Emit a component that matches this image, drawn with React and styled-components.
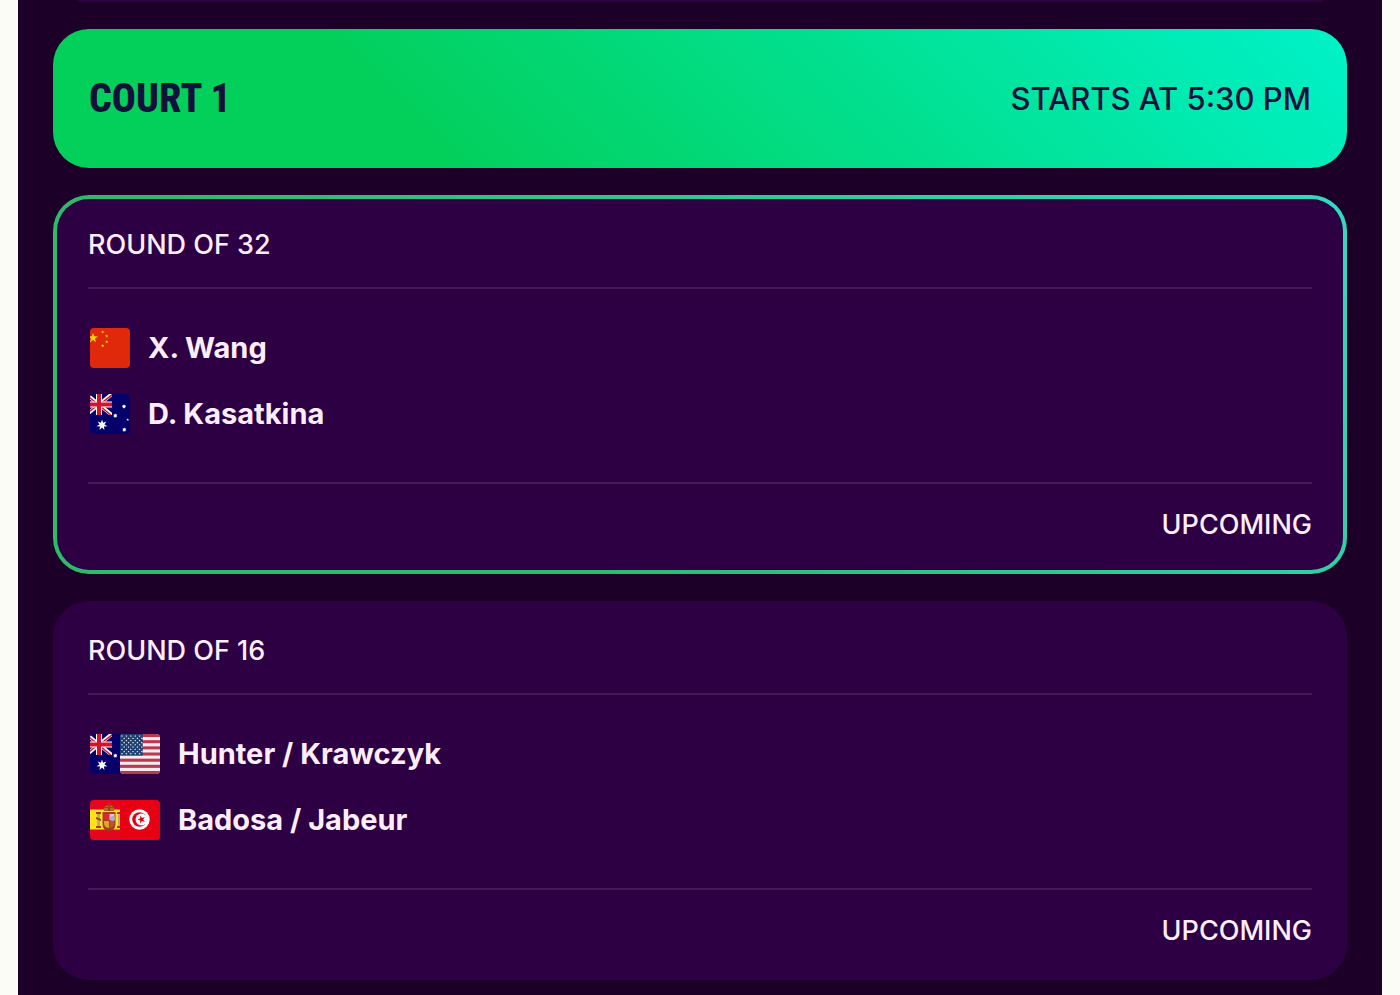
import React from "react";
import styled, { createGlobalStyle } from "styled-components";

const GlobalStyle = createGlobalStyle`
  *, *::before, *::after { box-sizing: border-box; }
  body {
    margin: 0;
    background: #fbfcf6;
    color: #fdeefe;
    font-family: Inter, "Liberation Sans", sans-serif;
  }
  h2, h3, p, ul { margin: 0; padding: 0; }
  ul { list-style: none; }
`;

const Schedule = styled.main`
  display: flex;
  flex-direction: column;
  gap: 27px;
  min-height: 100vh;
  margin: 0 18px;
  padding: 0 35px 15px;
  background: #1d0027;
`;

const PreviousCard = styled.div`
  height: 2px;
  margin: 0 24px;
  border-radius: 0 0 12px 12px;
  background: #2d0142;
`;

const CourtHeader = styled.header`
  display: flex;
  align-items: center;
  justify-content: space-between;
  height: 139px;
  padding: 0 36px;
  border-radius: 36px;
  background: linear-gradient(45deg, #03cf5b 28%, #00f2c9 100%);
  color: #12103c;
`;

const CourtName = styled.h2`
  font-family: "Roboto Condensed", "Liberation Sans Narrow", "Liberation Sans", sans-serif;
  font-size: 40px;
  line-height: 48px;
  font-weight: 800;
`;

const StartTime = styled.p`
  font-size: 31px;
  line-height: 40px;
  font-weight: 500;
`;

const Card = styled.article`
  padding: 0 31px;
  border: 4px solid transparent;
  border-radius: 36px;
  background:
    linear-gradient(#2d0044, #2d0044) ${({ $active }) => ($active ? "padding-box" : "border-box")},
    linear-gradient(45deg, #2dba6b 30%, #32dac0 100%) border-box;
`;

const CardHeader = styled.header`
  padding: 30px 0 26px;
  border-bottom: 2px solid #431a58;
`;

const Round = styled.h3`
  font-size: 27px;
  line-height: 32px;
  font-weight: 500;
`;

const Teams = styled.ul`
  display: flex;
  flex-direction: column;
  gap: 26px;
  padding: 39px 2px 48px;
`;

const Team = styled.li`
  display: flex;
  align-items: center;
  gap: 18px;
  height: 40px;
`;

const Flags = styled.span`
  display: flex;
`;

const FlagIcon = styled.svg`
  display: block;
  width: 40px;
  height: 40px;
  border-radius: 4px;

  & + & { margin-left: -10px; }
`;

const TeamName = styled.span`
  font-size: 29px;
  line-height: 40px;
  font-weight: 700;
`;

const CardFooter = styled.footer`
  padding: 25px 0 29px;
  border-top: 2px solid #431a58;
  text-align: right;
`;

const Status = styled.p`
  font-size: 27px;
  line-height: 32px;
  font-weight: 500;
`;

function starPoints(cx, cy, radius, points = 5, inner = 0.4) {
  return Array.from({ length: points * 2 }, (_, i) => {
    const r = i % 2 ? radius * inner : radius;
    const a = (Math.PI * i) / points - Math.PI / 2;
    return `${(cx + r * Math.cos(a)).toFixed(2)},${(cy + r * Math.sin(a)).toFixed(2)}`;
  }).join(" ");
}

function ChinaArt() {
  return (
    <>
      <path fill="#e0280b" d="M0 0h40v40H0z" />
      <g fill="#fbd30a">
        <polygon points={starPoints(3, 10, 5.2)} />
        <polygon points={starPoints(12.7, 4, 1.8)} />
        <polygon points={starPoints(16.7, 8, 1.8)} />
        <polygon points={starPoints(16.7, 13.8, 1.8)} />
        <polygon points={starPoints(12.7, 17.7, 1.8)} />
      </g>
    </>
  );
}

function AustraliaArt() {
  return (
    <>
      <path fill="#05006a" d="M0 0h40v40H0z" />
      <svg x="0" y="0" width="22" height="21">
        <path stroke="#fff" strokeWidth="3.6" d="M-5 -1 23 22M23 -1-5 22" />
        <path stroke="#d5122c" strokeWidth="1.4" d="M-5 0 9 11M9 11 23 23M23 0 9 11M9 10-5 21" />
        <path stroke="#fff" strokeWidth="6" d="M9 0v21M0 10.5h22" />
        <path stroke="#d5122c" strokeWidth="4" d="M9 0v21M0 10.5h22" />
      </svg>
      <g fill="#fff">
        <polygon points={starPoints(12, 31, 5.6, 7, 0.45)} />
        <polygon points={starPoints(34, 12.5, 2.2, 7, 0.6)} />
        <polygon points={starPoints(25.3, 21.7, 2.2, 7, 0.6)} />
        <polygon points={starPoints(37.7, 25.7, 1.5)} />
        <polygon points={starPoints(34.3, 35.7, 2.2, 7, 0.6)} />
      </g>
    </>
  );
}

function UsaArt() {
  const rows = Array.from({ length: 9 }, (_, i) => i);
  return (
    <>
      <path fill="#f7edf0" d="M0 0h40v40H0z" />
      {[0, 2, 4, 6, 8, 10, 12].map((i) => (
        <rect key={i} y={i * 3.08} width="40" height="3.08" fill="#b83a50" />
      ))}
      <path fill="#1d3e70" d="M0 0h22.7v21.5H0z" />
      <g fill="#fff">
        {rows.map((row) =>
          [0, 1, 2, 3, 4].map((col) => (
            <polygon
              key={`${row}-${col}`}
              points={starPoints((row % 2 ? 4.2 : 2) + col * 4.4, 2.1 + row * 2.2, 1.1)}
            />
          ))
        )}
      </g>
    </>
  );
}

function SpainArt() {
  return (
    <>
      <path fill="#e3061c" d="M0 0h40v40H0z" />
      <path fill="#ffe31a" d="M0 9.5h40v20H0z" />
      <g fill="#a33d1c">
        <path d="M7 13h3v14H7zM28 13h3v14h-3z" fill="#c9a56a" />
        <path d="M6 12h5v2H6zM6 26h5v2H6zM6 17l5 2v2l-5-2zM27 12h4v2h-4zM27 26h4v2h-4z" />
        <path d="M14 11q-2-5 5-6 7 1 5 6z" fill="#b66b16" />
        <path d="M18 3h2v8h-2zM14 7h10v1H14z" />
        <path d="M12.5 12h13v13q-1 6-6.5 6t-6.5-6z" />
        <path d="M14 14h5v6h-5z" fill="#dc2535" />
        <path d="M19.5 14h5v6h-5z" fill="#e5c5c9" />
        <path d="M14 21h5v7q-4 0-5-4z" fill="#e6a226" />
        <path d="M19.5 21h5v3q-1 4-5 4z" fill="#bf5131" />
        <circle cx="22.5" cy="18.5" r="2.5" fill="#adaccd" />
      </g>
    </>
  );
}

function TunisiaArt() {
  return (
    <>
      <path fill="#e70013" d="M0 0h40v40H0z" />
      <circle cx="19.5" cy="19.5" r="10.2" fill="#fff" />
      <circle cx="19.5" cy="19.5" r="7.3" fill="#e70013" />
      <circle cx="21.5" cy="19.5" r="5.9" fill="#fff" />
      <polygon
        fill="#e70013"
        points={starPoints(21.5, 19.5, 4.2)}
        transform="rotate(-18 21.5 19.5)"
      />
    </>
  );
}

const flagArt = {
  China: ChinaArt,
  Australia: AustraliaArt,
  "United States": UsaArt,
  Spain: SpainArt,
  Tunisia: TunisiaArt,
};

function Flag({ country }) {
  const Art = flagArt[country];
  return (
    <FlagIcon viewBox="0 0 40 40" role="img" aria-label={country}>
      <Art />
    </FlagIcon>
  );
}

const matches = [
  {
    round: "ROUND OF 32",
    status: "UPCOMING",
    active: true,
    teams: [
      { name: "X. Wang", countries: ["China"] },
      { name: "D. Kasatkina", countries: ["Australia"] },
    ],
  },
  {
    round: "ROUND OF 16",
    status: "UPCOMING",
    active: false,
    teams: [
      { name: "Hunter / Krawczyk", countries: ["Australia", "United States"] },
      { name: "Badosa / Jabeur", countries: ["Spain", "Tunisia"] },
    ],
  },
];

function MatchCard({ match }) {
  return (
    <Card $active={match.active}>
      <CardHeader>
        <Round>{match.round}</Round>
      </CardHeader>
      <Teams>
        {match.teams.map((team) => (
          <Team key={team.name}>
            <Flags>
              {team.countries.map((country) => (
                <Flag key={country} country={country} />
              ))}
            </Flags>
            <TeamName>{team.name}</TeamName>
          </Team>
        ))}
      </Teams>
      <CardFooter>
        <Status>{match.status}</Status>
      </CardFooter>
    </Card>
  );
}

export default function App() {
  return (
    <>
      <GlobalStyle />
      <Schedule>
        <PreviousCard />
        <CourtHeader>
          <CourtName>COURT 1</CourtName>
          <StartTime>STARTS AT 5:30 PM</StartTime>
        </CourtHeader>
        {matches.map((match) => (
          <MatchCard key={match.round} match={match} />
        ))}
      </Schedule>
    </>
  );
}
